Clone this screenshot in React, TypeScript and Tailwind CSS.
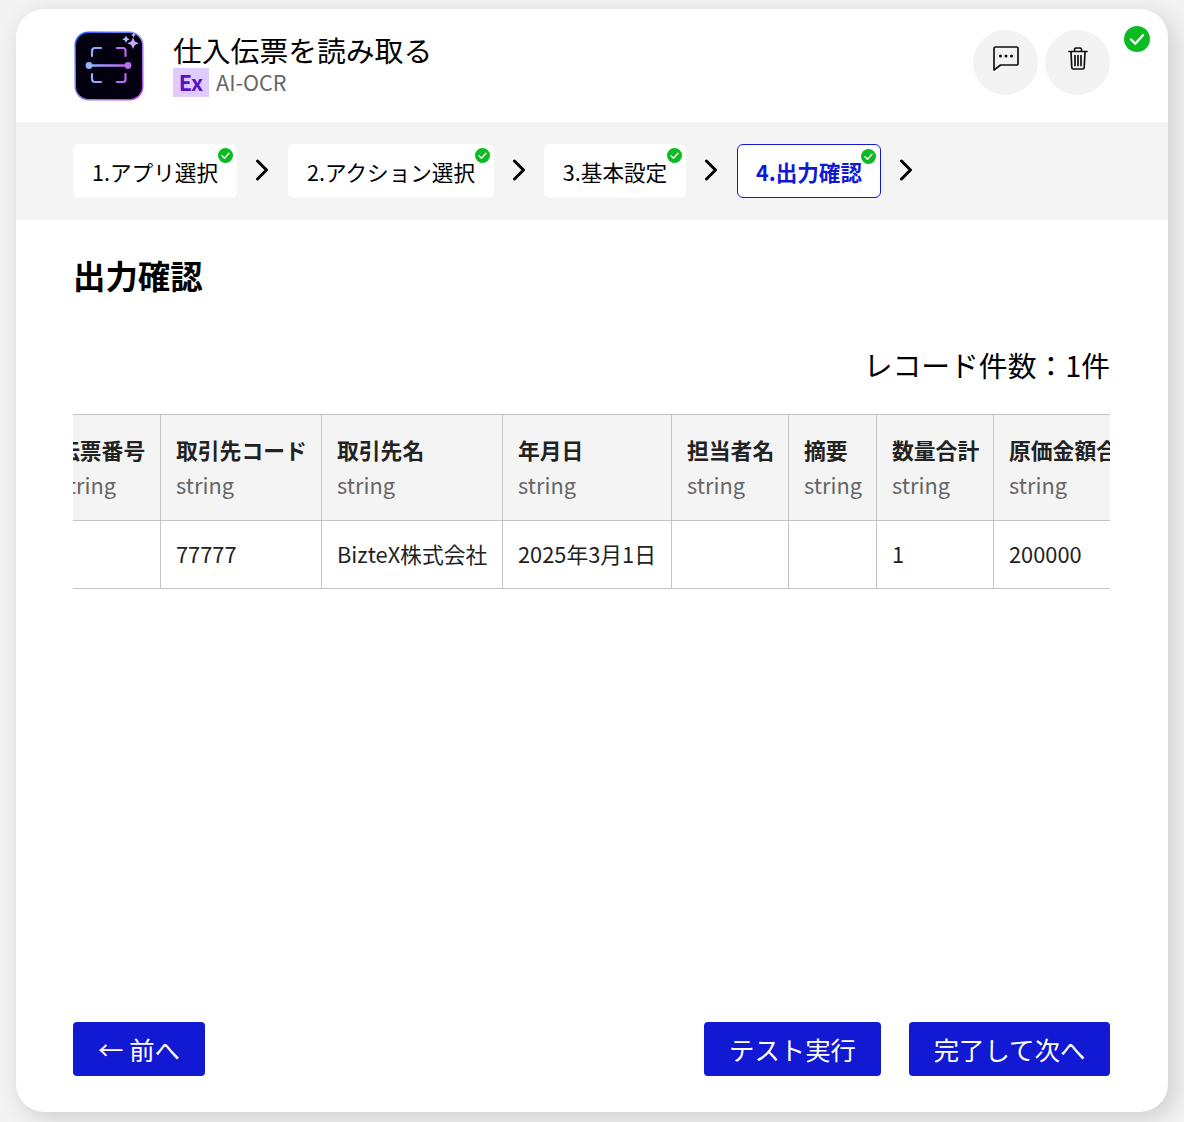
import React from "react";

const font = { fontFamily: '"Noto Sans CJK JP", "Noto Sans", sans-serif' };

const steps = [
  { label: "1.アプリ選択", width: "w-[164px]", gap: "w-[51px]" },
  { label: "2.アクション選択", width: "w-[206px]", gap: "w-[50px]" },
  { label: "3.基本設定", width: "w-[142px]", gap: "w-[51px]" },
  { label: "4.出力確認", width: "w-[144px]", gap: "w-[51px]", active: true },
];

const columns = [
  { name: "伝票番号", width: "w-[118px]", value: "" },
  { name: "取引先コード", width: "w-[161px]", value: "77777" },
  { name: "取引先名", width: "w-[181px]", value: "BizteX株式会社" },
  { name: "年月日", width: "w-[169px]", value: "2025年3月1日" },
  { name: "担当者名", width: "w-[117px]", value: "" },
  { name: "摘要", width: "w-[88px]", value: "" },
  { name: "数量合計", width: "w-[117px]", value: "1" },
  { name: "原価金額合計", width: "w-[160px]", value: "200000" },
];

const Check = ({ className }: { className: string }) => (
  <svg viewBox="0 0 26 26" className={className}>
    <circle cx="13" cy="13" r="13" fill="#0cbb22" />
    <path d="M7 13.500l4.200 4.200L19 9.200" fill="none" stroke="#fff" strokeWidth="2.400" strokeLinecap="round" strokeLinejoin="round" />
  </svg>
);

const Chevron = () => (
  <svg viewBox="0 0 14 22" className="h-[22px] w-[14px]" fill="none" stroke="#000" strokeWidth="3" strokeLinecap="round" strokeLinejoin="round">
    <path d="M2.500 2l9 9-9 9" />
  </svg>
);

const Logo = () => (
  <svg viewBox="0 0 70 70" className="h-[70px] w-[70px] shrink-0">
    <defs>
      <linearGradient id="frame" x1="0" y1="0" x2="1" y2="1">
        <stop offset="0" stopColor="#1a5cff" />
        <stop offset="0.5" stopColor="#8a8cf0" />
        <stop offset="1" stopColor="#c23ff0" />
      </linearGradient>
      <linearGradient id="mark" gradientUnits="userSpaceOnUse" x1="15" y1="34" x2="55" y2="34">
        <stop offset="0" stopColor="#8fb4ff" />
        <stop offset="1" stopColor="#c060f0" />
      </linearGradient>
    </defs>
    <rect x="0.500" y="0.500" width="69" height="69" rx="14" fill="url(#frame)" />
    <rect x="2" y="2" width="66" height="66" rx="12.500" fill="#03010f" />
    <g fill="none" stroke="url(#mark)" strokeWidth="2.200" strokeLinecap="round">
      <path d="M18 25v-5a3 3 0 0 1 3-3h6" />
      <path d="M43 17h6a2.500 2.500 0 0 1 2.500 2.500V25" />
      <path d="M18 43v5a3 3 0 0 0 3 3h6" />
      <path d="M43 51h6a2.500 2.500 0 0 0 2.500-2.500V43" />
    </g>
    <path d="M15 34.500h39" stroke="url(#mark)" strokeWidth="2.400" />
    <circle cx="15" cy="34.500" r="3.400" fill="#93b4ff" />
    <circle cx="54" cy="34.500" r="3.400" fill="#b86cf0" />
    <path d="M59 6.500l1.800 4 4 1.800-4 1.800-1.800 4-1.800-4-4-1.800 4-1.800z" fill="#c9a8ff" />
    <path d="M52 4.500l1.200 2.600 2.600 1.200-2.600 1.200-1.200 2.600-1.200-2.600-2.600-1.200 2.600-1.200z" fill="#a9c0ff" />
    <path d="M59.500 1.500l.8 1.700 1.700.8-1.700.8-.8 1.700-.8-1.700-1.700-.8 1.700-.8z" fill="#c9b8ff" />
  </svg>
);

const ChatIcon = () => (
  <svg viewBox="0 0 26 25" className="h-[25px] w-[26px]" fill="none" stroke="#111" strokeWidth="1.700" strokeLinejoin="round">
    <path d="M2.500 1h21a1.500 1.500 0 0 1 1.500 1.500v15a1.500 1.500 0 0 1-1.500 1.500H7.500L1 24V2.500A1.500 1.500 0 0 1 2.500 1z" />
    <circle cx="7.500" cy="10" r="1.500" fill="#111" stroke="none" />
    <circle cx="13" cy="10" r="1.500" fill="#111" stroke="none" />
    <circle cx="18.500" cy="10" r="1.500" fill="#111" stroke="none" />
  </svg>
);

const TrashIcon = () => (
  <svg viewBox="0 0 20 23" className="h-[23px] w-[20px]" fill="none" stroke="#111" strokeWidth="1.700" strokeLinecap="round" strokeLinejoin="round">
    <path d="M1 4.500h18" />
    <path d="M6.500 4V2.500A1.500 1.500 0 0 1 8 1h4a1.500 1.500 0 0 1 1.500 1.500V4" />
    <path d="M3 5l.8 15.500A1.600 1.600 0 0 0 5.400 22h9.200a1.600 1.600 0 0 0 1.600-1.500L17 5" />
    <path d="M7 8.500v10M10 8.500v10M13 8.500v10" />
  </svg>
);

export default function App() {
  return (
    <div style={font} className="h-[1122px] overflow-hidden bg-[#f3f3f3] pl-4 pt-[9px]">
      <div className="relative flex h-[1103px] w-[1152px] flex-col overflow-hidden rounded-[28px] bg-white shadow-[6px_6px_24px_rgba(0,0,0,0.16)]">
        <Check className="absolute right-[18px] top-[17px] h-[26px] w-[26px]" />

        <header className="flex h-[113px] shrink-0 items-start px-[58px] pt-[21px]">
          <div className="mt-[1px]">
            <Logo />
          </div>
          <div className="ml-[29px] flex-1 pt-[2px]">
            <h1 className="text-[28.800px] leading-[36px] text-black">仕入伝票を読み取る</h1>
            <div className="flex items-center">
              <span className="flex h-[29px] w-9 items-center justify-center bg-[#e0cbff] pb-[2px] text-[21.600px] font-bold leading-[26px] text-[#5a0fc8]">Ex</span>
              <span className="mb-[2px] ml-[7px] text-[21.600px] leading-[27px] text-[#666666]">AI-OCR</span>
            </div>
          </div>
          <div className="flex gap-[7px]">
            <button className="flex h-[65px] w-[65px] items-center justify-center rounded-full bg-[#f3f3f3] pb-2">
              <ChatIcon />
            </button>
            <button className="flex h-[65px] w-[65px] items-center justify-center rounded-full bg-[#f3f3f3] pb-2">
              <TrashIcon />
            </button>
          </div>
        </header>

        <nav className="flex h-[98px] shrink-0 items-center bg-[#f4f4f4] pl-[57px]">
          {steps.map((s) => (
            <React.Fragment key={s.label}>
              <div
                className={`relative flex h-[54px] items-center justify-center rounded-[6px] bg-white pt-[2px] text-[21.600px] ${s.width} ${
                  s.active ? "border border-[#1119d3] font-bold text-[#1119d3]" : "text-black"
                }`}
              >
                {s.label}
                <Check className="absolute right-[4px] top-[4px] h-[15px] w-[15px]" />
              </div>
              <div className={`flex h-[54px] items-center pb-[2px] pl-[18px] ${s.gap}`}>
                <Chevron />
              </div>
            </React.Fragment>
          ))}
        </nav>

        <main className="flex-1 pl-[57px] pr-[58px]">
          <h2 className="mt-[32px] text-[32.400px] font-bold leading-[46px] text-black">出力確認</h2>
          <p className="mt-[46px] text-right text-[28.800px] leading-[42px] text-black">レコード件数：1件</p>

          <div className="mt-[28px] overflow-hidden border-b border-t border-[#c4c4c4]">
            <div className="ml-[-30px] flex w-max">
              {columns.map((c, i) => (
                <div key={c.name} className={`shrink-0 ${c.width} ${i < columns.length - 1 ? "border-r border-[#c4c4c4]" : ""}`}>
                  <div className="h-[106px] border-b border-[#c4c4c4] bg-[#f4f4f4] px-[15px] pt-[17px]">
                    <div className="whitespace-nowrap text-[21.800px] font-bold leading-[35px] text-[#222222]">{c.name}</div>
                    <div className="text-[21.800px] leading-[35px] text-[#666666]">string</div>
                  </div>
                  <div className="flex h-[67px] items-center whitespace-nowrap px-[15px] pb-[1px] text-[21.800px] text-[#222222]">{c.value}</div>
                </div>
              ))}
            </div>
          </div>
        </main>

        <footer className="flex shrink-0 items-center justify-between pb-9 pl-[57px] pr-[58px]">
          <button className="flex h-[54px] w-[132px] items-center justify-center rounded-[4px] bg-[#1119d3] text-[25.400px] text-white">← 前へ</button>
          <div className="flex gap-7">
            <button className="h-[54px] w-[177px] rounded-[4px] bg-[#1119d3] text-[25.400px] text-white">テスト実行</button>
            <button className="h-[54px] w-[201px] rounded-[4px] bg-[#1119d3] text-[25.400px] text-white">完了して次へ</button>
          </div>
        </footer>
      </div>
    </div>
  );
}
